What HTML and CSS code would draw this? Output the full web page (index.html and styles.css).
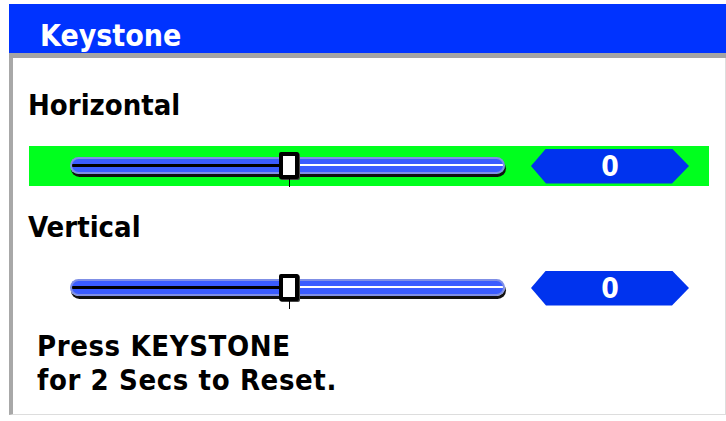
FILE: index.html
```html
<!DOCTYPE html>
<html lang="en">
  <head>
    <meta charset="UTF-8" />
    <meta name="viewport" content="width=device-width, initial-scale=1.0" />
    <title>Keystone</title>
    <link rel="stylesheet" href="styles.css">
  </head>
  <body>
    <div class="menu">
      <div class="menu-title">Keystone</div>
      <div class="menu-body">
        <div class="label">Horizontal</div>
        <div class="slider-row selected">
          <div class="track">
            <div class="track-left"></div>
            <div class="track-right"></div>
            <div class="thumb"></div>
          </div>
          <div class="value">0</div>
        </div>

        <div class="label">Vertical</div>
        <div class="slider-row">
          <div class="track">
            <div class="track-left"></div>
            <div class="track-right"></div>
            <div class="thumb"></div>
          </div>
          <div class="value">0</div>
        </div>

        <p class="hint">Press KEYSTONE<br />for 2 Secs to Reset.</p>
      </div>
    </div>
  </body>
</html>
```

FILE: styles.css
```css
body {
  margin: 0;
  background: white;
  font-family: "DejaVu Sans Condensed", "DejaVu Sans", Verdana, sans-serif;
  font-stretch: condensed;
  font-weight: bold;
}

.menu {
  margin: 4px 0 0 9px;
  width: 717px;
}

.menu-title {
  height: 33px;
  padding-top: 16px;
  padding-left: 31px;
  line-height: 31px;
  background-color: #0033ff;
  color: white;
  font-size: 30px;
  border-bottom: 5px solid #a4a4a4;
}

.menu-body {
  height: 357px;
  border-left: 4px solid #a8a8a8;
  border-right: 1px solid #dddddd;
  border-bottom: 1px solid #dddddd;
  padding-top: 31px;
  box-sizing: border-box;
}

.label {
  font-size: 29px;
  padding-left: 15px;
  height: 32px;
  line-height: 32px;
}

.slider-row {
  display: flex;
  align-items: center;
  margin: 25px 0 0 16px;
  width: 680px;
  height: 40px;
  padding-left: 41px;
  box-sizing: border-box;
}

.slider-row + .label {
  margin-top: 25px;
}

.slider-row.selected {
  background-color: #00ff1e;
}

.track {
  position: relative;
  display: flex;
  width: 435px;
  height: 17px;
  margin-top: -2px;
}

.track-left,
.track-right {
  height: 17px;
  box-sizing: border-box;
  border: 2px solid #7f8fe6;
  background: linear-gradient(#3a5cff 0, #3a5cff 5px, #000 5px, #000 8px, #3a5cff 8px);
  box-shadow: 1px 3px 0 #111;
}

.track-left {
  width: 215px;
  border-right: none;
  border-radius: 9px 0 0 9px;
}

.track-right {
  flex: 1;
  border-left: none;
  border-radius: 0 9px 9px 0;
  background: linear-gradient(#3a5cff 0, #3a5cff 5px, #fff 5px, #fff 7px, #3a5cff 7px);
}

.thumb {
  position: absolute;
  left: 209px;
  top: -5px;
  width: 20px;
  height: 27px;
  box-sizing: border-box;
  background: white;
  border: 4px solid black;
  border-radius: 2px;
  box-shadow: 1px 1px 0 #444;
}

.thumb::after {
  content: "";
  position: absolute;
  left: 6px;
  top: 23px;
  width: 1px;
  height: 8px;
  background: black;
}

.value {
  margin-left: 26px;
  width: 158px;
  height: 35px;
  line-height: 35px;
  background-color: #0033ee;
  color: white;
  font-size: 28px;
  text-align: center;
  clip-path: polygon(0 50%, 15px 0, calc(100% - 17px) 0, 100% 50%, calc(100% - 17px) 100%, 15px 100%);
}

.hint {
  margin: 21px 0 0 24px;
  font-size: 29px;
  line-height: 34px;
  letter-spacing: 0.6px;
}
```
